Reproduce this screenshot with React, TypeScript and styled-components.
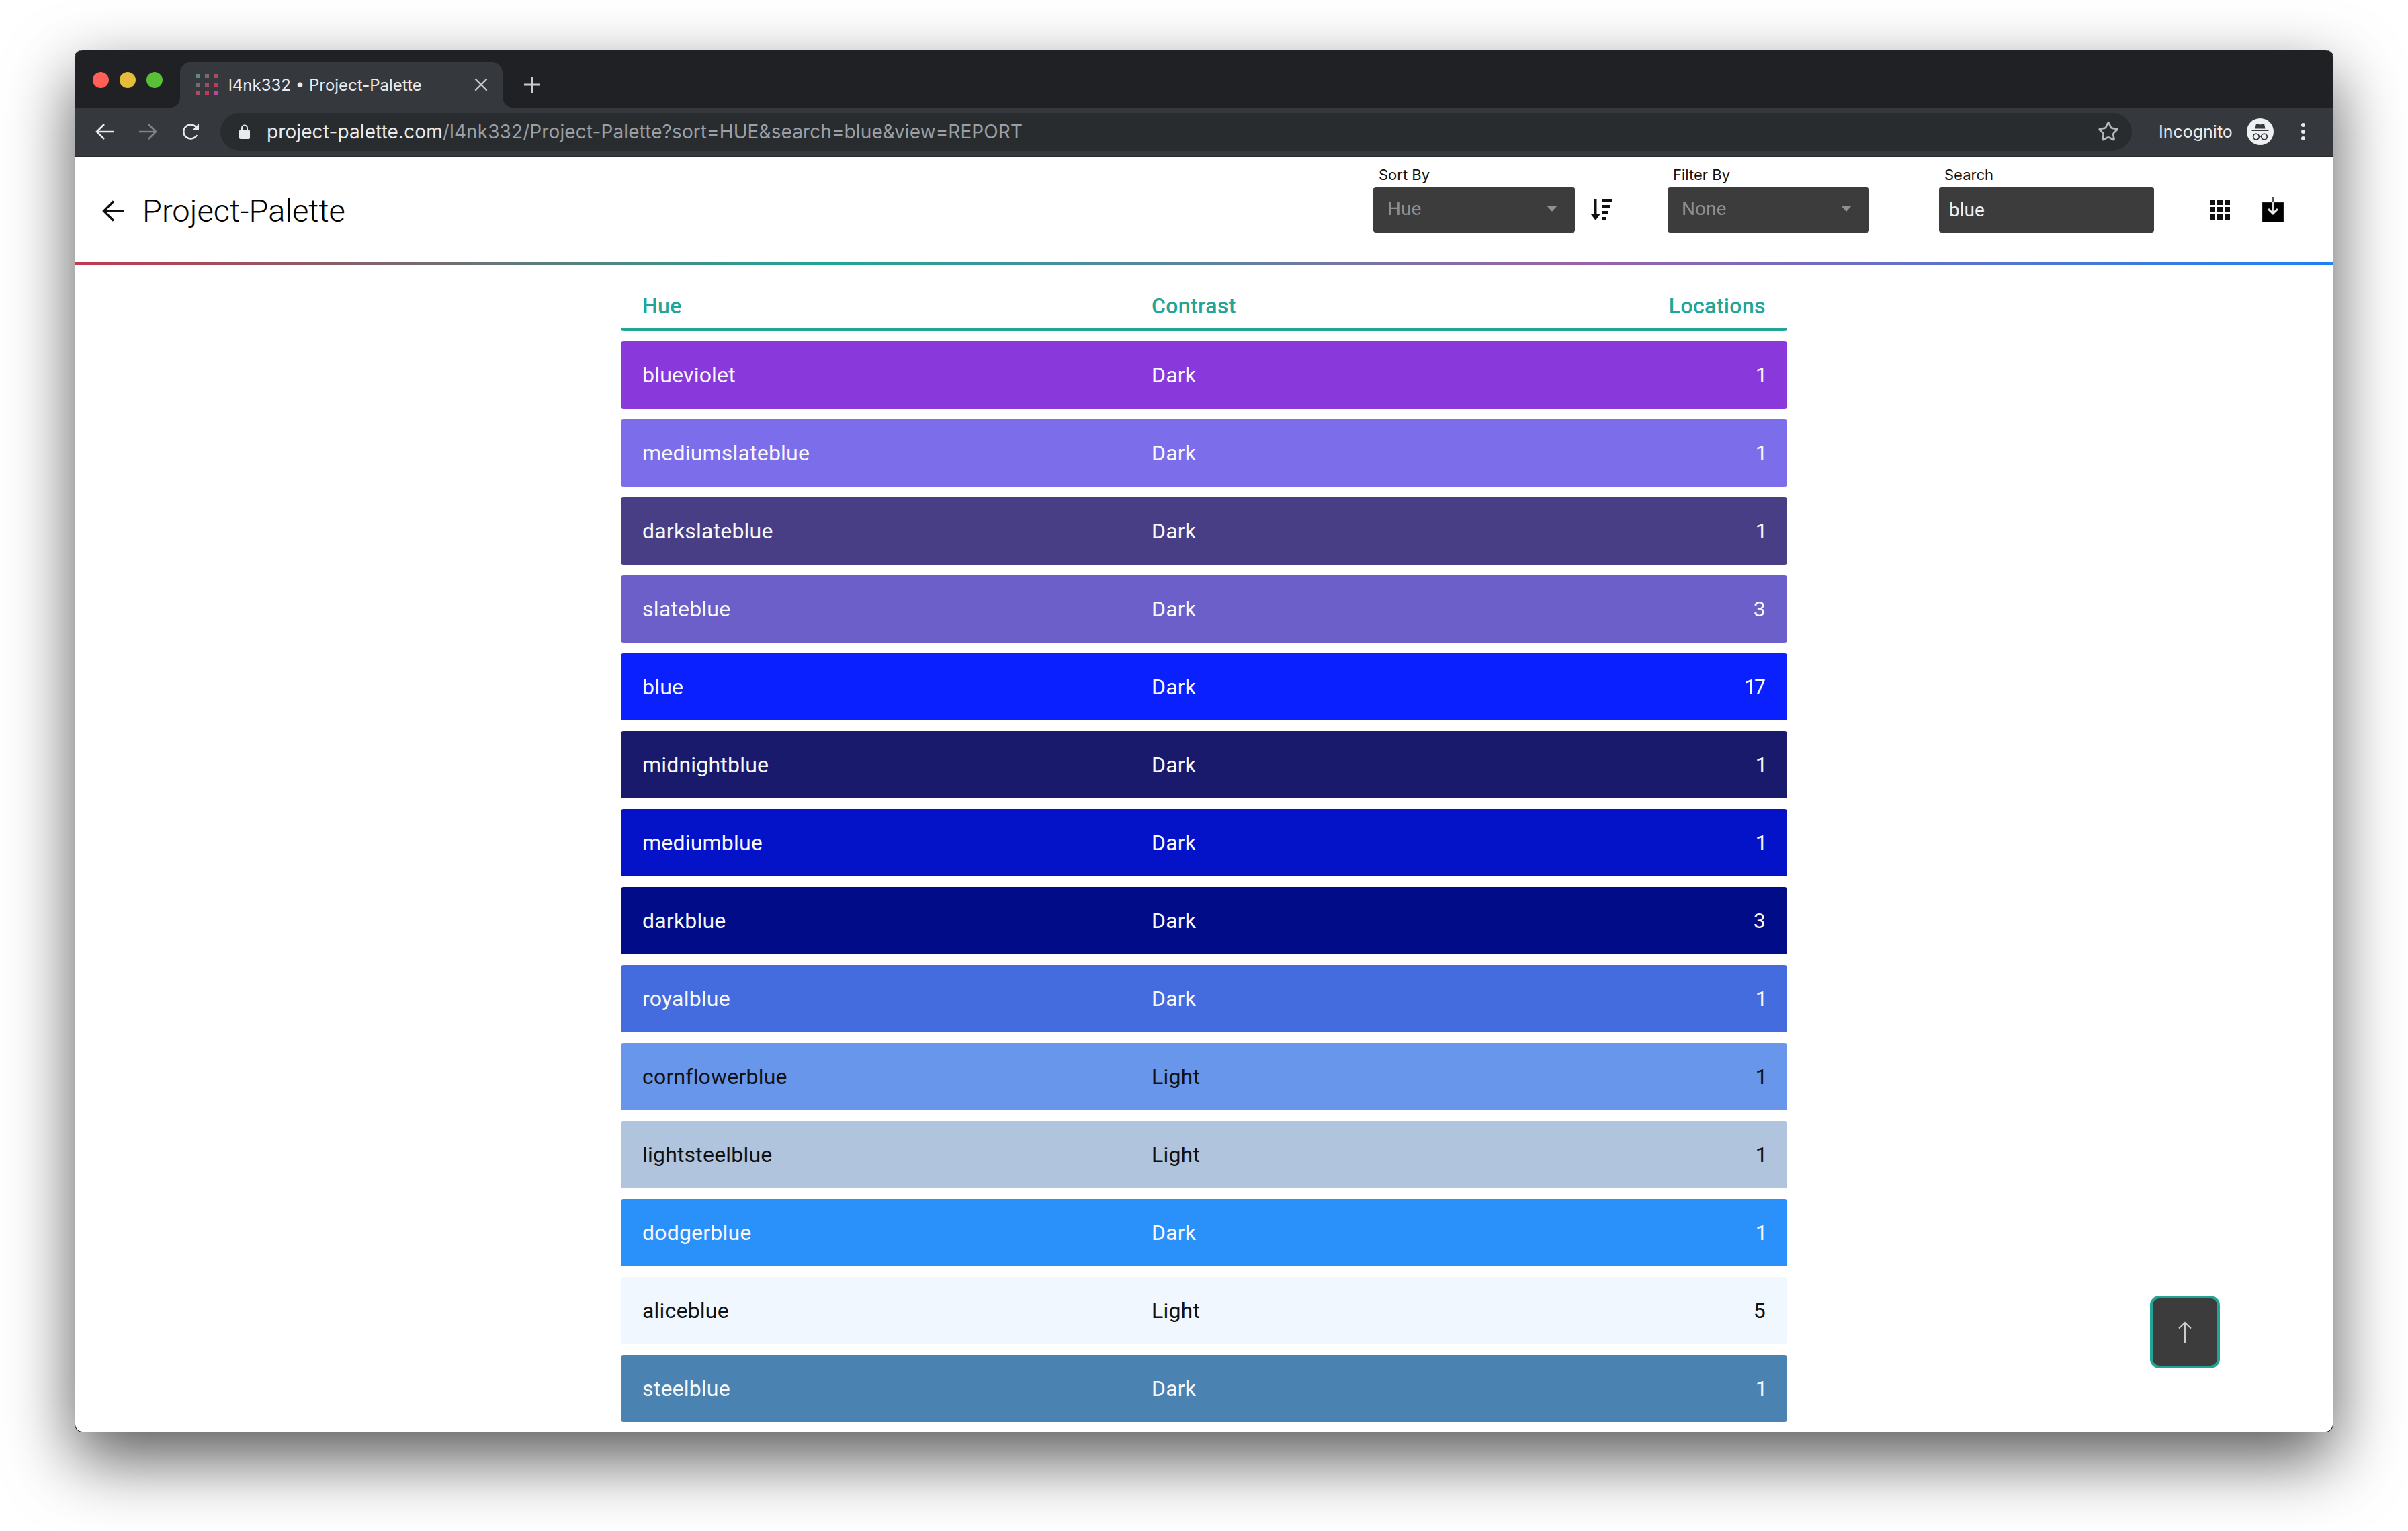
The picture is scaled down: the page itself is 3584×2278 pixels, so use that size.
import React from "react";
import styled, { createGlobalStyle } from "styled-components";
import { Star, X } from "lucide-react";

const GlobalStyle = createGlobalStyle`
  html, body {
    margin: 0;
    padding: 0;
    width: 3584px;
    height: 2278px;
    overflow: hidden;
    background: #ffffff;
    font-family: Roboto, "Liberation Sans", sans-serif;
  }
  * {
    box-sizing: border-box;
  }
`;

const CHROME_FONT = `Inter, Roboto, "Liberation Sans", sans-serif`;

const Page = styled.div`
  width: 3584px;
  height: 2278px;
  padding: 74px 111px 147px;
`;

const Window = styled.div`
  position: relative;
  height: 100%;
  display: flex;
  flex-direction: column;
  overflow: hidden;
  border: 1px solid #111214;
  border-top-color: #55575a;
  border-radius: 12px;
  background: #ffffff;
`;

const WindowShadow = styled.div`
  height: 100%;
  border-radius: 12px;
  box-shadow: 0 40px 100px rgba(0, 0, 0, 0.65);
`;

const TabStrip = styled.div`
  height: 85px;
  flex-shrink: 0;
  display: flex;
  background: #202124;
  font-family: ${CHROME_FONT};
`;

const Lights = styled.div`
  display: flex;
  gap: 16px;
  margin: 32px 0 0 26px;
`;

const Light = styled.span<{ $color: string }>`
  width: 24px;
  height: 24px;
  border-radius: 50%;
  background: ${(p) => p.$color};
`;

const Tab = styled.div`
  position: relative;
  width: 480px;
  height: 68px;
  margin: 17px 0 0 26px;
  padding: 0 16px 0 24px;
  display: flex;
  align-items: center;
  gap: 16px;
  border-radius: 16px 16px 0 0;
  background: #35383c;
  color: #e8eaed;
  font-size: 24px;

  &::before,
  &::after {
    content: "";
    position: absolute;
    bottom: 0;
    width: 16px;
    height: 16px;
  }
  &::before {
    left: -16px;
    background: radial-gradient(circle at 0 0, transparent 16px, #35383c 16.5px);
  }
  &::after {
    right: -16px;
    background: radial-gradient(circle at 100% 0, transparent 16px, #35383c 16.5px);
  }
`;

const Favicon = styled.div`
  display: grid;
  grid-template-columns: repeat(3, 6px);
  grid-auto-rows: 6px;
  gap: 7px;
`;

const FaviconDot = styled.span<{ $color: string }>`
  background: ${(p) => p.$color};
`;

const TabTitle = styled.span`
  flex: 1;
  white-space: nowrap;
`;

const TabClose = styled.span`
  display: flex;
  color: #c4c7cb;
`;

const NewTab = styled.span`
  display: flex;
  align-items: center;
  justify-content: center;
  width: 32px;
  height: 68px;
  margin: 17px 0 0 28px;
`;

const Toolbar = styled.div`
  height: 73px;
  flex-shrink: 0;
  display: flex;
  align-items: flex-start;
  padding: 8px 0 0 12px;
  background: #35383c;
  border-bottom: 1px solid #26282b;
  font-family: ${CHROME_FONT};
`;

const NavButton = styled.span`
  width: 64px;
  height: 56px;
  display: flex;
  align-items: center;
  justify-content: center;
`;

const Omnibox = styled.div`
  flex: 1;
  height: 56px;
  margin-left: 12px;
  padding: 0 19px 0 28px;
  display: flex;
  align-items: center;
  gap: 25px;
  border-radius: 28px;
  background: #292c2f;
  font-size: 28px;
  letter-spacing: 0.1px;
  color: #e8eaed;
`;

const UrlText = styled.span`
  flex: 1;
  white-space: nowrap;
`;

const UrlPath = styled.span`
  color: #9aa0a6;
`;

const ToolbarRight = styled.div`
  width: 299px;
  height: 56px;
  padding-left: 40px;
  display: flex;
  align-items: center;
`;

const ProfileName = styled.span`
  width: 131px;
  font-size: 25px;
  color: #e8eaed;
`;

const MenuDots = styled.span`
  width: 88px;
  display: flex;
  justify-content: center;
`;

const AppHeader = styled.header`
  height: 157px;
  flex-shrink: 0;
  display: flex;
  align-items: flex-start;
  padding-right: 73px;
`;

const TitleGroup = styled.div`
  height: 157px;
  margin-right: auto;
  padding: 4px 0 0 40px;
  display: flex;
  align-items: center;
  gap: 28px;
`;

const AppTitle = styled.h1`
  margin: 0;
  font-size: 47px;
  font-weight: 300;
  color: #000000;
`;

const Field = styled.div<{ $width: number; $gap: number }>`
  width: ${(p) => p.$width}px;
  margin-left: ${(p) => p.$gap}px;
  padding-top: 17px;
`;

const FieldLabel = styled.div`
  height: 20px;
  margin-bottom: 8px;
  padding-left: 8px;
  font-family: ${CHROME_FONT};
  font-size: 22px;
  line-height: 20px;
  color: #111111;
`;

const Control = styled.div`
  height: 68px;
  padding: 0 24px 3px 21px;
  display: flex;
  align-items: center;
  justify-content: space-between;
  border-radius: 4px;
  background: #3c3c3c;
  font-size: 28px;
  color: #8f8f8f;
`;

const SearchControl = styled(Control)`
  padding: 0 24px 0 15px;
  color: #eeeeee;
`;

const Caret = styled.span`
  width: 0;
  height: 0;
  margin-right: 2px;
  border-left: 8px solid transparent;
  border-right: 8px solid transparent;
  border-top: 9px solid #8f8f8f;
`;

const IconSlot = styled.div<{ $gap: number }>`
  height: 68px;
  margin: 45px 0 0 ${(p) => p.$gap}px;
  display: flex;
  align-items: center;
`;

const GradientRule = styled.div`
  height: 4px;
  flex-shrink: 0;
  background: linear-gradient(
    to right,
    #bf3a50 0%,
    #22a596 33.3%,
    #9a63a8 66.6%,
    #1e82f0 100%
  );
`;

const Content = styled.main`
  width: 1736px;
  margin: 0 auto;
  padding-top: 36px;
  flex-shrink: 0;
`;

const TableHead = styled.div`
  display: grid;
  grid-template-columns: 758px 1fr auto;
  height: 62px;
  padding: 0 32px 8px;
  border-bottom: 4px solid #22a596;
  border-radius: 0 0 4px 4px;
  font-size: 32px;
  font-weight: 500;
  line-height: 50px;
  letter-spacing: 0.4px;
  color: #22a596;
`;

const Rows = styled.div`
  margin-top: 16px;
  display: flex;
  flex-direction: column;
  gap: 16px;
`;

const Row = styled.div<{ $bg: string; $fg: string }>`
  height: 100px;
  flex-shrink: 0;
  padding: 0 32px;
  display: grid;
  grid-template-columns: 758px 1fr auto;
  align-items: center;
  border-radius: 4px;
  background: ${(p) => p.$bg};
  color: ${(p) => p.$fg};
  font-size: 32px;
  letter-spacing: 0.2px;
  font-variant-numeric: proportional-nums;
`;

const ScrollTop = styled.button`
  position: absolute;
  left: 3088px;
  top: 1853px;
  width: 104px;
  height: 108px;
  padding: 0;
  display: flex;
  align-items: center;
  justify-content: center;
  border: 4px solid #22a596;
  border-radius: 14px;
  background: #3c3c3c;
`;

const faviconColors = [
  "#5b8a8a",
  "#7a6a72",
  "#a84e60",
  "#7a6a72",
  "#a04c62",
  "#c03a55",
  "#a84e60",
  "#c03a55",
  "#b84a90",
];

const LIGHT_TEXT = "#f8f8f8";
const DARK_TEXT = "#111111";

const colors = [
  { name: "blueviolet", contrast: "Dark", locations: 1, bg: "#8938dc" },
  { name: "mediumslateblue", contrast: "Dark", locations: 1, bg: "#7c6eea" },
  { name: "darkslateblue", contrast: "Dark", locations: 1, bg: "#483e86" },
  { name: "slateblue", contrast: "Dark", locations: 3, bg: "#6c5fc9" },
  { name: "blue", contrast: "Dark", locations: 17, bg: "#0a20ff" },
  { name: "midnightblue", contrast: "Dark", locations: 1, bg: "#191a6c" },
  { name: "mediumblue", contrast: "Dark", locations: 1, bg: "#0412c8" },
  { name: "darkblue", contrast: "Dark", locations: 3, bg: "#000c88" },
  { name: "royalblue", contrast: "Dark", locations: 1, bg: "#456cdf" },
  { name: "cornflowerblue", contrast: "Light", locations: 1, bg: "#6796ea" },
  { name: "lightsteelblue", contrast: "Light", locations: 1, bg: "#b0c4de" },
  { name: "dodgerblue", contrast: "Dark", locations: 1, bg: "#2a91fb" },
  { name: "aliceblue", contrast: "Light", locations: 5, bg: "#f0f7ff" },
  { name: "steelblue", contrast: "Dark", locations: 1, bg: "#4a83b2" },
];

const ChromeArrow: React.FC<{ color: string; flip?: boolean }> = ({ color, flip }) => (
  <svg width="28" height="28" viewBox="0 0 28 28" fill="none" stroke={color} strokeWidth="2.6">
    <path d={flip ? "M1 14H26M15 3l11 11-11 11" : "M27 14H2M13 3L2 14l11 11"} />
  </svg>
);

const ReloadIcon = () => (
  <svg width="28" height="28" viewBox="0 0 28 28" fill="none">
    <path d="M23 19a10.500 10.500 0 1 1 0-10" stroke="#e8eaed" strokeWidth="2.6" />
    <path d="M26 2v10H16z" fill="#e8eaed" />
  </svg>
);

const LockIcon = () => (
  <svg width="16" height="22" viewBox="0 0 16 22" fill="none">
    <path d="M4 9V5.500a4 4 0 0 1 8 0V9" stroke="#e8eaed" strokeWidth="2" />
    <rect x="0" y="8" width="16" height="14" rx="2" fill="#e8eaed" />
  </svg>
);

const IncognitoIcon = () => (
  <svg width="40" height="40" viewBox="0 0 40 40">
    <circle cx="20" cy="20" r="20" fill="#eff0f1" />
    <path d="M14 8l6 1.500L26 8l1.500 7.500h-15z" fill="#35383c" />
    <rect x="7.500" y="17" width="25" height="2" fill="#35383c" />
    <circle cx="14" cy="27.500" r="4.300" fill="none" stroke="#35383c" strokeWidth="1.800" />
    <circle cx="26" cy="27.500" r="4.300" fill="none" stroke="#35383c" strokeWidth="1.800" />
    <path d="M18 27h4" stroke="#35383c" strokeWidth="1.500" />
  </svg>
);

const DotsIcon = () => (
  <svg width="6" height="26" viewBox="0 0 6 26" fill="#e8eaed">
    <circle cx="3" cy="3" r="3" />
    <circle cx="3" cy="13" r="3" />
    <circle cx="3" cy="23" r="3" />
  </svg>
);

const BackArrow = () => (
  <svg width="32" height="32" viewBox="0 0 32 32" fill="none" stroke="#111111" strokeWidth="3.200">
    <path d="M32 16H3M17 1.500L2.500 16 17 30.500" />
  </svg>
);

const SortIcon = () => (
  <svg width="31" height="32" viewBox="0 0 31 32" fill="#111111">
    <rect x="5" y="0" width="3.500" height="26" />
    <path d="M0 23h13.500l-6.750 9z" />
    <rect x="16" y="0" width="15" height="4" />
    <rect x="16" y="9" width="12" height="4" />
    <rect x="16" y="18" width="9" height="4" />
    <rect x="16" y="27" width="6" height="4" />
  </svg>
);

const GridIcon = () => (
  <svg width="30" height="30" viewBox="0 0 30 30" fill="#111111">
    {[0, 11, 22].map((y) =>
      [0, 11, 22].map((x) => <rect key={`${x}-${y}`} x={x} y={y} width="8" height="8" />)
    )}
  </svg>
);

const DownloadIcon = () => (
  <svg width="32" height="38" viewBox="0 0 32 38">
    <rect x="0" y="8" width="32" height="30" fill="#000000" stroke="#444444" strokeWidth="1" />
    <path d="M16 0V8" stroke="#555555" strokeWidth="3" />
    <path d="M16 8V25" stroke="#dddddd" strokeWidth="3" />
    <path d="M9 18l7 7 7-7" fill="none" stroke="#eeeeee" strokeWidth="3" />
  </svg>
);

const UpArrow = () => (
  <svg width="20" height="32" viewBox="0 0 20 32" fill="none" stroke="#cccccc" strokeWidth="2">
    <path d="M10 2V32M1 10.500L10 2l9 8.500" />
  </svg>
);

export default function App() {
  return (
    <Page>
      <GlobalStyle />
      <WindowShadow>
        <Window>
          <TabStrip>
            <Lights>
              <Light $color="#ff5f57" />
              <Light $color="#e5bd3b" />
              <Light $color="#5ac038" />
            </Lights>
            <Tab>
              <Favicon>
                {faviconColors.map((color, i) => (
                  <FaviconDot key={i} $color={color} />
                ))}
              </Favicon>
              <TabTitle>l4nk332 • Project-Palette</TabTitle>
              <TabClose>
                <X size={32} strokeWidth={1.800} />
              </TabClose>
            </Tab>
            <NewTab>
              <svg width="24" height="24" viewBox="0 0 24 24" stroke="#c9cbcf" strokeWidth="3">
                <path d="M12 0V24M0 12H24" />
              </svg>
            </NewTab>
          </TabStrip>

          <Toolbar>
            <NavButton>
              <ChromeArrow color="#e8eaed" />
            </NavButton>
            <NavButton>
              <ChromeArrow color="#7f8286" flip />
            </NavButton>
            <NavButton>
              <ReloadIcon />
            </NavButton>
            <Omnibox>
              <LockIcon />
              <UrlText>
                project-palette.com
                <UrlPath>/l4nk332/Project-Palette?sort=HUE&amp;search=blue&amp;view=REPORT</UrlPath>
              </UrlText>
              <Star size={32} strokeWidth={2} color="#b4b7bb" />
            </Omnibox>
            <ToolbarRight>
              <ProfileName>Incognito</ProfileName>
              <IncognitoIcon />
              <MenuDots>
                <DotsIcon />
              </MenuDots>
            </ToolbarRight>
          </Toolbar>

          <AppHeader>
            <TitleGroup>
              <BackArrow />
              <AppTitle>Project-Palette</AppTitle>
            </TitleGroup>
            <Field $width={300} $gap={0}>
              <FieldLabel>Sort By</FieldLabel>
              <Control>
                Hue
                <Caret />
              </Control>
            </Field>
            <IconSlot $gap={24}>
              <SortIcon />
            </IconSlot>
            <Field $width={300} $gap={83}>
              <FieldLabel>Filter By</FieldLabel>
              <Control>
                None
                <Caret />
              </Control>
            </Field>
            <Field $width={320} $gap={104}>
              <FieldLabel>Search</FieldLabel>
              <SearchControl>blue</SearchControl>
            </Field>
            <IconSlot $gap={83}>
              <GridIcon />
            </IconSlot>
            <IconSlot $gap={48}>
              <DownloadIcon />
            </IconSlot>
          </AppHeader>
          <GradientRule />

          <Content>
            <TableHead>
              <span>Hue</span>
              <span>Contrast</span>
              <span>Locations</span>
            </TableHead>
            <Rows>
              {colors.map((color) => (
                <Row
                  key={color.name}
                  $bg={color.bg}
                  $fg={color.contrast === "Light" ? DARK_TEXT : LIGHT_TEXT}
                >
                  <span>{color.name}</span>
                  <span>{color.contrast}</span>
                  <span>{color.locations}</span>
                </Row>
              ))}
            </Rows>
          </Content>

          <ScrollTop aria-label="Back to top">
            <UpArrow />
          </ScrollTop>
        </Window>
      </WindowShadow>
    </Page>
  );
}
